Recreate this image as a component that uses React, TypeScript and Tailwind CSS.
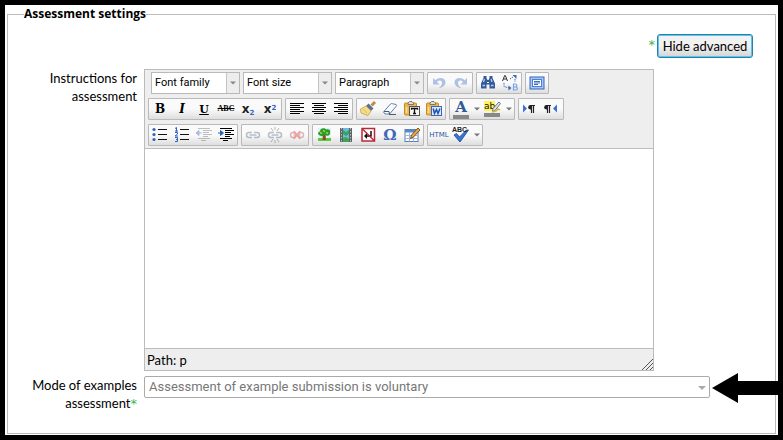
import { useState, type ReactNode } from "react";

function Svg({ children }: { children: ReactNode }) {
  return (
    <svg viewBox="0 0 20 20" className="size-5 shrink-0" fill="none" aria-hidden="true">
      {children}
    </svg>
  );
}

function Tool({ name, off, children }: { name: string; off?: boolean; children: ReactNode }) {
  return (
    <button
      type="button"
      title={name}
      aria-label={name}
      disabled={off}
      className={`flex h-5 w-[22px] items-center justify-center leading-none ${off ? "opacity-40" : ""}`}
    >
      {children}
    </button>
  );
}

function More({ name }: { name: string }) {
  return (
    <button type="button" aria-label={name} className="flex h-5 w-[10px] items-center justify-center">
      <svg viewBox="0 0 6 4" className="h-1 w-1.5" aria-hidden="true">
        <path d="M0 0.5h6L3 3.5z" fill="#777" />
      </svg>
    </button>
  );
}

function Group({ children }: { children: ReactNode }) {
  return (
    <div className="flex h-[22px] items-center rounded-[1px] border border-[#b9b9b9] bg-linear-to-b from-[#fafafa] from-50% to-[#dedede]">
      {children}
    </div>
  );
}

function ListBox({ label, options }: { label: string; options: string[] }) {
  return (
    <div className="flex h-[22px] w-[89px] border border-[#b9b9b9] bg-white">
      <select
        aria-label={label}
        className="min-w-0 flex-1 appearance-none pl-[3px] font-['Roboto',sans-serif] text-[11px] text-black outline-none"
      >
        <option>{label}</option>
        {options.map((o) => (
          <option key={o}>{o}</option>
        ))}
      </select>
      <span className="pointer-events-none flex w-[13px] items-center justify-center border-l border-[#c4c4c4] bg-[#ededed]">
        <svg viewBox="0 0 6 4" className="h-1 w-1.5" aria-hidden="true">
          <path d="M0 0.5h6L3 3.5z" fill="#888" />
        </svg>
      </span>
    </div>
  );
}

function Lines({ rows }: { rows: [number, number][] }) {
  return (
    <Svg>
      {rows.map(([x, w], i) => (
        <rect key={i} x={x} y={4 + i * 2} width={w} height="1" fill="#000" />
      ))}
    </Svg>
  );
}

function Indent({ flip }: { flip?: boolean }) {
  return (
    <Svg>
      <path d="M4 3.500h12M9 5.500h9M9 7.500h6M9 9.500h9M9 11.500h5M4 13.500h12M7 15.500h5" stroke={flip ? "#666" : "#000"} />
      <path d={flip ? "M5 5.500v5L2 8zM5 8h3" : "M4.500 5.500v5L7.500 8zM2 8h3"} fill="#2f62c0" stroke="#2f62c0" />
    </Svg>
  );
}

function ListIcon({ numbered }: { numbered?: boolean }) {
  return (
    <Svg>
      <path d="M8 4.500h9M8 9.500h9M8 14.500h9" stroke="#111" />
      {numbered ? (
        <path
          d="M3 3.500l1.500-1v4M3 6h3M3 7.500h2.500v1.500L3 11h3M3 12.500h2.500v4H3M4 14.500h1.500"
          stroke="#2f62c0"
        />
      ) : (
        <g fill="#2f62c0">
          <circle cx="4" cy="4.500" r="1.600" />
          <circle cx="4" cy="9.500" r="1.600" />
          <circle cx="4" cy="14.500" r="1.600" />
        </g>
      )}
    </Svg>
  );
}

function LinkIcon({ kind }: { kind: "link" | "anchor" | "unlink" }) {
  const stroke = kind === "unlink" ? "#a45b66" : "#526783";
  return (
    <Svg>
      <path
        d="M9 7.500H6a2.500 2.500 0 0 0 0 5h3M11 7.500h3a2.500 2.500 0 0 1 0 5h-3M6.500 10h7"
        stroke={stroke}
        strokeWidth="1.500"
      />
      {kind === "anchor" && <path d="M10 2v3M6 3l2 3M14 3l-2 3M10 15v3M6 17l2-3M14 17l-2-3" stroke="#555" />}
      {kind === "unlink" && <path d="M6.500 6.500l7 7M13.500 6.500l-7 7" stroke="#e31c1c" strokeWidth="2" />}
    </Svg>
  );
}

function Paste({ letter }: { letter: string }) {
  const word = letter === "W";
  return (
    <Svg>
      <rect x="2.500" y="4" width="12" height="12" rx="1" fill="#efb64b" stroke="#c48a22" />
      <path d="M6 5.500V4l1.500-1.500h2.500L11.500 4v1.500z" fill="#ddd" stroke="#777" />
      <path d="M4.500 8v6" stroke="#fbe09a" strokeWidth="1.500" />
      <rect x="7.500" y="7.500" width="10" height="9" fill={word ? "#dce8fb" : "#f5f5f5"} stroke={word ? "#3a68b6" : "#555"} />
      {word ? (
        <path d="M9.200 9.500l1.300 5 2-4 1.500 4 2-5" stroke="#1f4fae" strokeWidth="1.500" />
      ) : (
        <path d="M9.500 10.800V9.500h6v1.300M12.500 9.500v5M11 14.500h3" stroke="#111" strokeWidth="1.300" />
      )}
    </Svg>
  );
}

function Undo() {
  return (
    <path
      d="M4 5v6.500h6.500L8 9C10 6.800 12.700 7.300 13 9.800c.2 2.200-1.500 4-3.500 5.500 4.200-.8 7.200-3 7-6.300C16.200 4.700 10 3.500 6.300 7.200z"
      fill="#3f6fc8"
    />
  );
}

function Direction({ rtl }: { rtl?: boolean }) {
  return (
    <Svg>
      <path d={rtl ? "M15 5.500v8l-4-4z" : "M3 5.500v8l4-4z"} fill="#3c6fd0" />
      <g transform={rtl ? "translate(-6 0)" : undefined}>
        <path d="M10.500 6a2.300 2.300 0 0 0 0 4.600h1V6z" fill="#222" />
        <path d="M10 6.500h5M11.500 6v8M13.500 6v8" stroke="#222" strokeWidth="1.200" />
      </g>
    </Svg>
  );
}

function Toolbar() {
  return (
    <div className="flex flex-col gap-1 border-b border-[#bdbdbd] bg-[#eee] px-[3px] pt-[2px] pb-[2px]">
      <div className="flex flex-wrap gap-[3px] pl-[3px]">
        <ListBox label="Font family" options={["Arial", "Georgia", "Verdana"]} />
        <ListBox label="Font size" options={["8pt", "10pt", "12pt"]} />
        <ListBox label="Paragraph" options={["Heading 1", "Heading 2", "Preformatted"]} />
        <Group>
          <Tool name="Undo" off><Svg><Undo /></Svg></Tool>
          <Tool name="Redo" off><Svg><g transform="matrix(-1 0 0 1 20 0)"><Undo /></g></Svg></Tool>
        </Group>
        <Group>
          <Tool name="Find">
            <Svg>
              <path d="M5.500 3h3v2l1 2h1l1-2V3h3v2l2.500 5.500v5h-5.500v-4h-3v4H3v-5L5.500 5z" fill="#345b99" />
              <path d="M4.500 12.500h2.500M13 12.500h2.500M6.500 6l-1 3M13 6l1 3" stroke="#b3cef2" strokeWidth="1.300" />
              <path d="M9 9.500h2" stroke="#fff" />
            </Svg>
          </Tool>
          <Tool name="Replace">
            <Svg>
              <path d="M2.500 8l2.200-5.500h.6L7.500 8M3.500 6h3" stroke="#333" />
              <path d="M13.500 11v6h2c2.500 0 2.500-3 0-3h-2 1.700c2.200 0 2.200-3 0-3z" stroke="#7aa1ec" strokeWidth="1.200" />
              <path d="M4 10v3.500l5 1.500M10 6l3-2M15 6v3" stroke="#3b67bd" strokeDasharray="1.500 1" />
              <path d="M8.500 12.500l3 2.500-3 2.500zM12.500 2h4v4z" fill="#3b67bd" />
            </Svg>
          </Tool>
        </Group>
        <Group>
          <Tool name="Full screen">
            <Svg>
              <rect x="3" y="4" width="14" height="12" fill="#a9c6f4" stroke="#3567bb" />
              <rect x="5.500" y="6.500" width="9" height="7" fill="#fff" stroke="#4b7ed5" />
              <path d="M7 8.500h6M7 10h6M7 11.500h4" stroke="#376cc4" />
            </Svg>
          </Tool>
        </Group>
      </div>

      <div className="flex flex-wrap gap-[3px]">
        <Group>
          <Tool name="Bold"><span className="font-['DejaVu_Serif',serif] text-[12px] font-bold">B</span></Tool>
          <Tool name="Italic"><span className="font-['DejaVu_Serif',serif] text-[12px] font-bold italic">I</span></Tool>
          <Tool name="Underline"><span className="font-['DejaVu_Serif',serif] text-[11px] font-bold underline">U</span></Tool>
          <Tool name="Strikethrough"><span className="font-['Liberation_Serif',serif] text-[8px] font-bold line-through">ABC</span></Tool>
          <Tool name="Subscript">
            <span className="font-['DejaVu_Sans',sans-serif] text-[12px] font-bold text-[#222]">x<sub className="text-[7px] text-[#2f62c0]">2</sub></span>
          </Tool>
          <Tool name="Superscript">
            <span className="font-['DejaVu_Sans',sans-serif] text-[12px] font-bold text-[#222]">x<sup className="text-[7px] text-[#2f62c0]">2</sup></span>
          </Tool>
        </Group>
        <Group>
          <Tool name="Align left"><Lines rows={[[3, 14], [3, 10], [3, 14], [3, 10], [3, 14], [3, 10]]} /></Tool>
          <Tool name="Align center"><Lines rows={[[3, 14], [5, 10], [3, 14], [5, 10], [3, 14], [5, 10]]} /></Tool>
          <Tool name="Align right"><Lines rows={[[3, 14], [7, 10], [3, 14], [7, 10], [3, 14], [7, 10]]} /></Tool>
        </Group>
        <Group>
          <Tool name="Clean up code">
            <Svg>
              <path d="M17 3l-3.500 3.500" stroke="#c08a50" strokeWidth="3" />
              <path d="M10.500 4.500l5 5-2.500 2.500L8 7z" fill="#5d6f96" />
              <path d="M8 7l5 5-3 4.500-7-2.500-.5-4z" fill="#f3dc8c" stroke="#cdae55" />
              <path d="M5 10l4 4" stroke="#d8bd69" />
            </Svg>
          </Tool>
          <Tool name="Remove formatting">
            <Svg>
              <path d="M3.500 13l7-8c.6-.6 1.400-.6 2-.3l3.500.8c.7.300.8 1 .3 1.600L9.500 15H5z" fill="#f7faff" stroke="#657fa8" />
              <path d="M4 12.500l5 0 .5 2.500M9 15.500h7" stroke="#46597b" />
            </Svg>
          </Tool>
          <Tool name="Paste as plain text"><Paste letter="T" /></Tool>
          <Tool name="Paste from Word"><Paste letter="W" /></Tool>
        </Group>
        <Group>
          <Tool name="Text color">
            <span className="flex flex-col items-center">
              <span className="h-[15px] font-['DejaVu_Serif',serif] text-[15px] leading-[15px] font-bold text-[#315895]">A</span>
              <span className="h-1 w-4 bg-[#888]" />
            </span>
          </Tool>
          <More name="More text colors" />
          <Tool name="Background color">
            <Svg>
              <rect x="1" y="2" width="11" height="10" fill="#fff25b" />
              <text x="1" y="10" fontSize="9" fontFamily="DejaVu Sans, sans-serif" fill="#111">ab</text>
              <path d="M16 3l1.500 1.500-5.500 7-2.500 1 .5-3z" fill="#dbe4f2" stroke="#6b7583" />
              <path d="M9 13l4-1 2-2 2 1" stroke="#d6b832" strokeWidth="1.500" />
              <rect x="1" y="14" width="16" height="4" fill="#888" />
            </Svg>
          </Tool>
          <More name="More background colors" />
        </Group>
        <Group>
          <Tool name="Left to right"><Direction /></Tool>
          <Tool name="Right to left"><Direction rtl /></Tool>
        </Group>
      </div>

      <div className="flex flex-wrap gap-[3px]">
        <Group>
          <Tool name="Bulleted list"><ListIcon /></Tool>
          <Tool name="Numbered list"><ListIcon numbered /></Tool>
          <Tool name="Outdent" off><Indent flip /></Tool>
          <Tool name="Indent"><Indent /></Tool>
        </Group>
        <Group>
          <Tool name="Insert link" off><LinkIcon kind="link" /></Tool>
          <Tool name="Prevent automatic linking" off><LinkIcon kind="anchor" /></Tool>
          <Tool name="Unlink" off><LinkIcon kind="unlink" /></Tool>
        </Group>
        <Group>
          <Tool name="Insert image">
            <Svg>
              <rect x="4" y="3" width="13" height="13" fill="#dcf0ff" />
              <path d="M4 13h13v3H4z" fill="#5fc83a" />
              <path d="M9 9h2.500l.5 6H8.500z" fill="#8a501a" />
              <path d="M6 10.500c-3-1-2-4 0-4 0-4 5-4 6-2 3-1 5 1 4 3 1 3-3 4-5 2.500-2 1.500-4 1.500-5 .5z" fill="#2f9a20" />
              <path d="M6 7.500l2 1M9 5.500l2 1M12 7.500l2 1" stroke="#8bd95a" strokeWidth="1.500" />
            </Svg>
          </Tool>
          <Tool name="Insert media">
            <Svg>
              <rect x="4" y="3" width="12" height="14" fill="#5b6567" />
              <path d="M5.500 3v14M14.500 3v14" stroke="#bbb" strokeDasharray="1.500 1.500" />
              <rect x="7" y="3" width="6" height="14" fill="#66bce4" />
              <path d="M7 5l3 2 3-2v4l-3 2-3-2zM7 13l3-1 3 2v3H7z" fill="#3ba653" />
            </Svg>
          </Tool>
          <Tool name="Insert nonbreaking space">
            <Svg>
              <rect x="4" y="3.500" width="12.500" height="12.500" fill="#fff" stroke="#b42b38" strokeWidth="1.500" />
              <path d="M13 6v5H8" stroke="#111" strokeWidth="1.500" />
              <path d="M9 8v6l-3-3z" fill="#111" />
              <path d="M4.500 4l12 12" stroke="#c51f2e" strokeWidth="1.300" />
            </Svg>
          </Tool>
          <Tool name="Insert custom character">
            <span className="font-['DejaVu_Serif',serif] text-[15px] font-bold text-[#4169b4]">Ω</span>
          </Tool>
          <Tool name="Insert table">
            <Svg>
              <rect x="3" y="4.500" width="13" height="12" fill="#fff" stroke="#5c7eb5" />
              <path d="M3 4.500h13v3H3z" fill="#5a88c8" />
              <path d="M3 10.500h13M3 13.500h13M7.500 7.500v9M11.500 7.500v9" stroke="#a3b8d7" />
              <path d="M16 3l2 2-6.500 7-3 1.500 1-3.500z" fill="#eda541" stroke="#74562c" />
            </Svg>
          </Tool>
        </Group>
        <Group>
          <Tool name="Edit HTML source">
            <span className="font-['DejaVu_Sans',sans-serif] text-[7px] text-[#1f4f9f]">HTML</span>
          </Tool>
          <Tool name="Toggle spellchecker">
            <Svg>
              <path d="M3 10l2.500-1.500L8.500 12l7-7h2L9 17z" fill="#3d74cd" stroke="#275aab" />
              <text x="1" y="7" fontSize="7" fontWeight="bold" fontFamily="Liberation Sans, sans-serif" fill="#222">ABC</text>
            </Svg>
          </Tool>
          <More name="Spellchecker languages" />
        </Group>
      </div>
    </div>
  );
}

function AdvancedMark() {
  return <span className="font-['DejaVu_Sans',sans-serif] text-[13px] leading-none text-[#3cb54a]">*</span>;
}

export default function App() {
  const [text, setText] = useState("");
  return (
    <div className="relative flex min-h-screen flex-col border-5 border-black bg-white px-[2px] pb-[1px] font-['Lato',sans-serif] text-[13px] leading-[18px] text-black">
      <fieldset className="min-w-0 flex-1 border border-[#bbb]">
        <legend className="ml-4 font-['Open_Sans',sans-serif] text-[12px] font-bold">Assessment settings</legend>

        <div className="mt-[11px] mr-[22px] flex justify-end gap-[2px]">
          <span className="pt-1 leading-none"><AdvancedMark /></span>
          <button
            type="button"
            className="h-6 w-24 rounded-[3px] border border-[#2a7ea9] bg-linear-to-b from-[#f2f2f2] from-50% to-[#d4d4d4] inset-ring inset-ring-[#55c8f0]"
          >
            Hide advanced
          </button>
        </div>

        <div className="mt-[11px] grid grid-cols-[129px_minmax(0,1fr)] gap-x-[7px] gap-y-[5px]">
          <label htmlFor="instructions" className="text-right">
            Instructions for assessment
          </label>
          <div className="w-[510px] max-w-full border border-[#bbb]">
            <Toolbar />
            <textarea
              id="instructions"
              value={text}
              onChange={(e) => setText(e.target.value)}
              className="block h-[199px] w-full resize-none bg-white p-2 outline-none"
            />
            <div className="flex h-[22px] items-center justify-between border-t border-[#bbb] bg-[#eee] pl-[2px]">
              <span>Path: p</span>
              <svg viewBox="0 0 12 12" className="size-3 self-end" aria-hidden="true">
                <path d="M1 12L12 1M5 12l7-7M9 12l3-3" stroke="#555" />
              </svg>
            </div>
          </div>

          <label htmlFor="mode" className="text-right">
            Mode of examples
            <br />
            assessment
            <AdvancedMark />
          </label>
          <div className="relative mr-[65px] self-start">
            <select
              id="mode"
              disabled
              className="block h-[22px] w-full appearance-none rounded-[2px] border border-[#aaa] bg-white pl-1 font-['Roboto',sans-serif] text-[13px] text-[#777] opacity-100"
            >
              <option>Assessment of example submission is voluntary</option>
            </select>
            <svg viewBox="0 0 8 4" className="pointer-events-none absolute top-[10px] right-1 h-1 w-2" aria-hidden="true">
              <path d="M0 0h8L4 4z" fill="#aaa" />
            </svg>
            <svg viewBox="0 0 72 30" className="absolute -top-[3px] left-full ml-[2px] h-[30px] w-[72px]" aria-hidden="true">
              <path d="M0 15L26 0v8h46v14H26v8z" fill="#000" />
            </svg>
          </div>
        </div>
      </fieldset>
    </div>
  );
}
